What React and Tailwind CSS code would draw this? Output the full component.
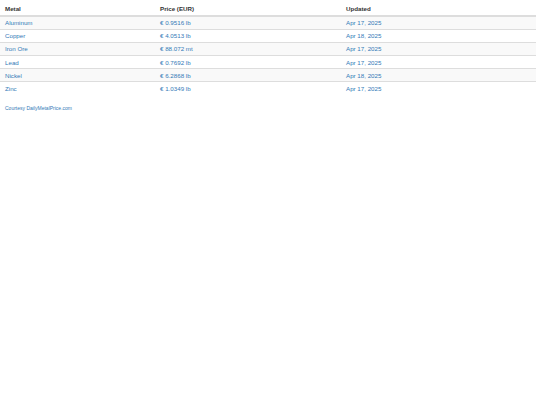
export default function App() {
  const rows = [
    ["Aluminum", "€ 0.9516 lb", "Apr 17, 2025"],
    ["Copper", "€ 4.0513 lb", "Apr 18, 2025"],
    ["Iron Ore", "€ 88.072 mt", "Apr 17, 2025"],
    ["Lead", "€ 0.7692 lb", "Apr 17, 2025"],
    ["Nickel", "€ 6.2868 lb", "Apr 18, 2025"],
    ["Zinc", "€ 1.0349 lb", "Apr 17, 2025"],
  ];
  return (
    <div className="w-[540px] h-[405px] bg-white font-['Liberation_Sans',Arial,sans-serif]">
      <table className="w-[536px] border-collapse text-[6.2px] leading-none">
        <thead>
          <tr className="h-[16px] border-b-2 border-[#dddddd]">
            <th className="w-[155px] pl-[5px] pb-[2.5px] align-bottom text-left font-bold text-[#333333]">Metal</th>
            <th className="w-[186px] pl-[5px] pb-[2.5px] align-bottom text-left font-bold text-[#333333]">Price (EUR)</th>
            <th className="pl-[5px] pb-[2.5px] align-bottom text-left font-bold text-[#333333]">Updated</th>
          </tr>
        </thead>
        <tbody>
          {rows.map((r, i) => (
            <tr
              key={i}
              className={
                "h-[13.2px] border-t border-[#dddddd] " +
                (i % 2 === 0 ? "bg-[#f9f9f9]" : "bg-white")
              }
            >
              <td className="pl-[5px] pt-[1px] text-[#337ab7]">{r[0]}</td>
              <td className="pl-[5px] pt-[1px] text-[#337ab7]">{r[1]}</td>
              <td className="pl-[5px] pt-[1px] text-[#337ab7]">{r[2]}</td>
            </tr>
          ))}
        </tbody>
      </table>
      <div className="pl-[5px] pt-[11px] text-[5px] leading-none text-[#337ab7]">
        Courtesy DailyMetalPrice.com
      </div>
    </div>
  );
}
